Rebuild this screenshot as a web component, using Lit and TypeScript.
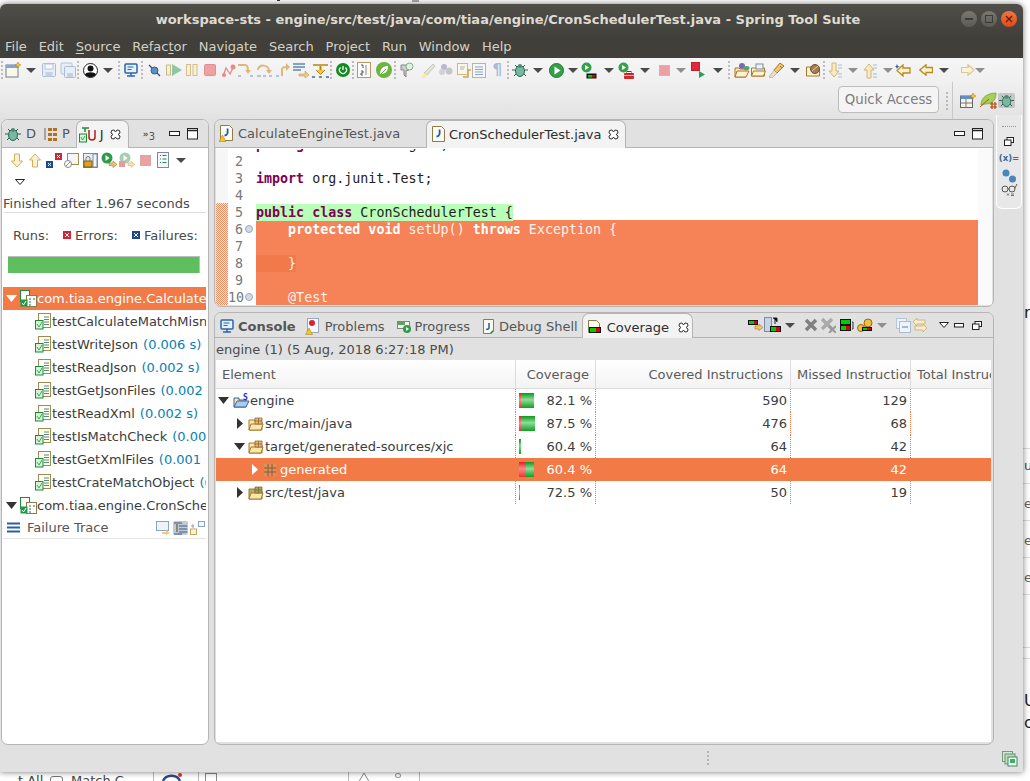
import { LitElement, html, css, svg } from "lit";
import { customElement } from "lit/decorators.js";

const S = (w: number, h: number, body: unknown, vb?: string) =>
  html`<svg class="ic" width=${w} height=${h} viewBox=${vb || `0 0 ${w} ${h}`}>${body}</svg>`;
const sp = (n: number) => html`<span class="sp" style="width:${n}px"></span>`;

const bugBody = svg`<path d="M3 3l3 3M13 3l-3 3M0 8h3M13 8h3M2 14l3-3M14 14l-3-3" stroke="#2a5a4a"/><ellipse cx="8" cy="9" rx="4.500" ry="5.500" fill="#78b7a0" stroke="#2d6a5a"/><circle cx="8" cy="4" r="2" fill="#4a8a7a"/>`;
const icons: Record<string, () => unknown> = {
  newwin: () => S(16, 16, svg`<rect x="1" y="3" width="12" height="12" fill="#fdf8e4" stroke="#6d7f9c"/><rect x="1" y="3" width="12" height="3" fill="#7ea6d8"/><path d="M13 0l1 2 2 1-2 1-1 2-1-2-2-1 2-1z" fill="#f4c430" stroke="#a87a10" stroke-width=".5"/>`),
  save: () => S(16, 16, svg`<rect x="1.500" y="1.500" width="13" height="13" rx="1" fill="#e8eef5" stroke="#a9bcd4"/><rect x="4" y="2" width="8" height="5" fill="#f6f8fb" stroke="#b8c7da"/><rect x="4.500" y="10" width="7" height="4.500" fill="#c3d1e2"/>`),
  saveall: () => S(17, 16, svg`<rect x="1" y="1" width="11" height="11" rx="1" fill="#e8eef5" stroke="#b4c4d8"/><rect x="4.500" y="4.500" width="11" height="11" rx="1" fill="#e8eef5" stroke="#a9bcd4"/><rect x="7" y="11" width="6" height="4" fill="#c3d1e2"/>`),
  profile: () => S(15, 15, svg`<circle cx="7.500" cy="7.500" r="7" fill="#fff" stroke="#222"/><circle cx="7.500" cy="5.500" r="3" fill="#111"/><path d="M2 11.500c1-3 10-3 11 0-2 3.500-9 3.500-11 0z" fill="#111"/>`),
  monitor: () => S(14, 14, svg`<rect x="1" y="1" width="12" height="9" rx="1" fill="#e8f0fa" stroke="#2a66ad" stroke-width="1.500"/><path d="M3.500 4h6M3.500 6.500h4" stroke="#2a66ad"/><path d="M3 13h8M7 10v3" stroke="#2a66ad" stroke-width="1.500"/>`),
  bp: () => S(13, 13, svg`<path d="M1 1l11 11" stroke="#2a4d8c" stroke-width="1.300"/><circle cx="6.500" cy="6.500" r="3.500" fill="#5f8fbf" stroke="#345f8f"/>`),
  resume: () => S(16, 12, svg`<rect x=".5" y="1" width="4" height="10" fill="#f6efd0" stroke="#c9b98a"/><path d="M6 0l10 6-10 6z" fill="#8fc7a0"/>`),
  suspend: () => S(12, 12, svg`<rect x=".5" y=".5" width="4" height="11" fill="#f6efd0" stroke="#d3bf8c"/><rect x="7" y=".5" width="4" height="11" fill="#f6efd0" stroke="#d3bf8c"/>`),
  stop: () => S(12, 12, svg`<rect x=".5" y=".5" width="11" height="11" rx="1" fill="#efa0a0" stroke="#dc9090"/>`),
  disc: () => S(15, 13, svg`<path d="M2 12l3-8 4 6 4-8" fill="none" stroke="#e88a8a" stroke-width="1.300"/><circle cx="3" cy="11" r="2" fill="#e88a8a"/><circle cx="12" cy="3" r="2.500" fill="#e88a8a"/>`),
  into: () => S(17, 14, svg`<path d="M1 2h7c3 0 3 3 3 6" fill="none" stroke="#dcb978" stroke-width="2"/><path d="M8 7h6l-3 4z" fill="#dcb978"/><path d="M1 13h3M13 13h3" stroke="#9bb7d6" stroke-width="1.500"/>`),
  over: () => S(17, 14, svg`<path d="M2 7c0-6 11-6 11 1" fill="none" stroke="#dcb978" stroke-width="2"/><path d="M10 7h6l-3 4z" fill="#dcb978"/><path d="M1 13h4M7 13h3M13 13h3" stroke="#9bb7d6" stroke-width="1.500"/>`),
  ret: () => S(15, 14, svg`<path d="M6 13V7c0-3 2-3 5-3" fill="none" stroke="#dcb978" stroke-width="2"/><path d="M10 0v8l4-4z" fill="#dcb978"/><path d="M0 13h3" stroke="#9bb7d6" stroke-width="1.500"/>`),
  drop: () => S(17, 16, svg`<path d="M0 2h12M0 5h12M0 8h8" stroke="#5f86b3" stroke-width="1.500"/><path d="M6 12h6V9l4 4-4 3v-2H6z" fill="#f0c987" stroke="#c49a50" stroke-width=".6"/>`),
  filt: () => S(17, 15, svg`<path d="M1 2h15" stroke="#b8860b" stroke-width="1.500"/><path d="M8.500 3v6" stroke="#b8860b" stroke-width="2"/><path d="M4 7l4.500 4.500L13 7" fill="#f0c24a" stroke="#b8860b"/><path d="M0 14h3M7 14h3M14 14h3" stroke="#3a6ea5" stroke-width="1.500"/>`),
  power: () => S(14, 14, svg`<circle cx="7" cy="7" r="7" fill="#118a1e"/><path d="M4.500 4.500a3.500 3.500 0 1 0 5 0M7 3v4" fill="none" stroke="#fff" stroke-width="1.300"/>`),
  book: () => S(14, 16, svg`<rect x=".5" y=".5" width="13" height="15" fill="#fafafa" stroke="#b49a6a"/><path d="M9 3v10" stroke="#888"/><path d="M4 3h2v3M4 9h2v2H4v2h2" fill="none" stroke="#333" stroke-width=".8"/>`),
  leaf: () => S(16, 16, svg`<circle cx="8" cy="8" r="8" fill="#6db33f"/><path d="M4 12c0-6 4-8 8-8 0 5-2 8-8 8z" fill="#fff"/><path d="M4 13l6-6" stroke="#6db33f"/>`),
  search: () => S(14, 16, svg`<path d="M1 3h8v5l-3 1v6l-2-2V8H1z" fill="#c9cfc9" stroke="#888"/><circle cx="9.500" cy="4.500" r="3.500" fill="#e0f2e0" stroke="#7fb08f"/>`),
  hl: () => S(15, 15, svg`<path d="M12 1l2 2-8 9-3-2z" fill="#e3e3d8" stroke="#c8c8b8"/><path d="M0 15l3-5 3 2-2 3z" fill="#f6ef9a"/>`),
  bubbles: () => S(14, 12, svg`<circle cx="5" cy="3" r="3" fill="#bdb6d2"/><circle cx="3" cy="8" r="3" fill="#d2d2d2"/><circle cx="10" cy="7" r="3.500" fill="#c6c6c6"/>`),
  docs: () => S(15, 15, svg`<rect x=".5" y=".5" width="10" height="11" fill="#fbf7e6" stroke="#c9b98a"/><path d="M6 14h5V7h3" fill="none" stroke="#c9a45a" stroke-width="1.500"/><path d="M3 4h5M3 6h4" stroke="#a8b6c6"/>`),
  doc: () => S(14, 15, svg`<rect x=".5" y=".5" width="13" height="14" fill="#f4f6fa" stroke="#b7b7a0"/><path d="M3 4h8M3 6.500h8M3 9h8M3 11.500h8" stroke="#8ba4c4"/>`),
  pil: () => html`<span class="pil">¶</span>`,
  bug: () => S(16, 16, bugBody),
  run: () => S(15, 15, svg`<circle cx="7.500" cy="7.500" r="7" fill="#33a04a" stroke="#1f7a34"/><path d="M5.500 3.500l6 4-6 4z" fill="#fff"/>`),
  cov: () => S(16, 17, svg`<circle cx="5.500" cy="5.500" r="5" fill="#33a04a"/><path d="M4 3l4 2.500L4 8z" fill="#fff"/><rect x="5.500" y="11.500" width="10" height="5" fill="#111"/><rect x="7" y="13" width="4.500" height="2.500" fill="#0c0"/><rect x="11.500" y="13" width="3" height="2.500" fill="#d00"/>`),
  tool: () => S(16, 17, svg`<circle cx="5.500" cy="5.500" r="5" fill="#33a04a"/><path d="M4 3l4 2.500L4 8z" fill="#fff"/><rect x="6" y="11" width="10" height="6" rx="1" fill="#cf2a2a"/><rect x="9" y="9.500" width="4" height="2" fill="none" stroke="#a22"/><path d="M6 13.500h10" stroke="#fff" stroke-width=".7"/>`),
  stop2: () => S(11, 11, svg`<rect x=".5" y=".5" width="10" height="10" fill="#eba0a8" stroke="#d8b0b0"/>`),
  termrun: () => S(14, 16, svg`<rect x=".5" y=".5" width="8" height="8" fill="#e02a3a" stroke="#c02030"/><path d="M8 9l6 3.500L8 16z" fill="#2e9e5a"/>`),
  open1: () => S(16, 15, svg`<path d="M1 14V5h4l1 1h6v8z" fill="#fbe8b8" stroke="#a8782a"/><path d="M1 14l2-6h12l-3 6z" fill="#fdf1cf" stroke="#a8782a"/><circle cx="8" cy="3" r="3" fill="#7a6bb0"/><ellipse cx="12.500" cy="5" rx="3" ry="2" fill="#58a070"/>`),
  open2: () => S(15, 14, svg`<path d="M.5 13V5h13v8z" fill="#fdf1cf" stroke="#a8782a"/><path d="M.5 13l2-5h12l-2 5z" fill="#fdf1cf" stroke="#a8782a"/><rect x="5" y="1" width="7" height="5" fill="#eef2f8" stroke="#7a8ca5"/>`),
  brush: () => S(16, 16, svg`<path d="M11 1l4 3-7 7-3-3z" fill="#f0c46a" stroke="#a8782a"/><path d="M5 8l3 3-5 5-3-1z" fill="#e8e0c8" stroke="#9a9a80" stroke-width=".6"/><path d="M11 4l2 2" stroke="#a8782a"/>`),
  nut: () => S(15, 13, svg`<path d="M.5 12V3h6l1 1h6v8z" fill="#fdf1cf" stroke="#a8782a"/><circle cx="9" cy="5" r="4.500" fill="#a67c52" stroke="#6f4e2e"/><path d="M6 7l6-5" stroke="#e0cfa8"/>`),
  down: () => S(14, 17, svg`<path d="M4 1h4v8h3l-5 6-5-6h3z" fill="#fbeac0" stroke="#d0b47a"/><path d="M10 3h4M10 6h4M10 12h4M10 15h4" stroke="#a9bcd4"/>`),
  up: () => S(14, 17, svg`<path d="M4 16h4V8h3L6 2 1 8h3z" fill="#fbeac0" stroke="#d0b47a"/><path d="M10 3h4M10 6h4M10 12h4M10 15h4" stroke="#a9bcd4"/>`),
  backs: () => S(16, 13, svg`<path d="M15 4H8V1L2 6.500 8 12V9h7z" fill="#fdf1cf" stroke="#b88a20" stroke-width="1.300"/><path d="M2 0l.8 2 2 .6-2 .7L2 5l-.8-1.700-1.200-.7 1.200-.6z" fill="#2a5fb0"/>`),
  back: () => S(14, 12, svg`<path d="M13.500 3.500H7V.8L.8 6 7 11.200V8.500h6.500z" fill="#fdf1cf" stroke="#b88a20" stroke-width="1.300"/>`),
  fwd: () => S(14, 12, svg`<path d="M.5 3.500H7V.8L13.200 6 7 11.200V8.500H.5z" fill="#fbf2dc" stroke="#e0c48a" stroke-width="1.200"/>`),
  arrow: () => S(10, 5, svg`<path d="M0 0h10L5 5z" fill="#4a4a4a"/>`),
  arrowg: () => S(10, 5, svg`<path d="M0 0h10L5 5z" fill="#8f8f8f"/>`),
  sep: () => S(2, 18, svg`<path d="M1 0v18" stroke="#888" stroke-dasharray="2 2"/>`),
  persp: () => S(16, 15, svg`<rect x=".5" y="3" width="12" height="11.500" fill="#f8f4e4" stroke="#666"/><rect x=".5" y="3" width="12" height="3" fill="#5f8fc8"/><path d="M6 6v8M1 10h11" stroke="#777"/><path d="M13 0l1 2 2 1-2 1-1 2-1-2-2-1 2-1z" fill="#f4c430" stroke="#a87a10" stroke-width=".5"/>`),
  sts: () => S(18, 17, svg`<path d="M1 13C1 5 8 1 16 1c0 8-4 11-11 11z" fill="#a5cf58" stroke="#78982e" stroke-width=".7"/><path d="M0 15l9-8" stroke="#b06010"/><path d="M10 12h7M10 15h7M12 10v7M15 10v7" stroke="#b5420e" stroke-width="1.200"/>`),
};

const jdoc = svg`<path d="M1.500.5h9l3 3v12h-12z" fill="#fbfbf6" stroke="#8f7b48"/>`;
const jdocIcon = (warn = false) =>
  S(15, 17, svg`${jdoc}<path d="M8.500 3.500c.5 4 .2 7-3 7" fill="none" stroke="#2a5a9c" stroke-width="1.800"/>${warn ? svg`<path d="M3.500 10l3.500 6.500H0z" fill="#f4c430" stroke="#a07a10" stroke-width=".5"/>` : ""}`);
const testIcon = () =>
  S(16, 17, svg`<rect x="3.500" y=".5" width="12" height="14" fill="#fdfdf8" stroke="#a08a50"/><path d="M9 4h5M9 6.500h5M9 9h5M9 11.500h5" stroke="#5c8a70"/><rect x=".5" y="7.500" width="7.500" height="8.500" fill="#d8f2d8" stroke="#1c8a3a"/><path d="M2 11l2 3 3-5" fill="none" stroke="#3aaa5a"/>`);
const classIcon = () =>
  S(17, 17, svg`<rect x=".5" y=".5" width="9" height="11" fill="#fff" stroke="#1c8a3a"/><rect x="6.500" y="5.500" width="10" height="11" fill="#fff" stroke="#8f7b48"/><rect x=".5" y="9.500" width="7" height="7" fill="#1c9a44"/><path d="M2 13l1.500 2 2.500-4" fill="none" stroke="#fff"/><path d="M9 9h2M13 9h2M9 12h2M9 15h2" stroke="#1c6a4a"/>`);
const pkg = (fill: string, lines: string) =>
  S(16, 14, svg`<path d="M1 13V3h6v2h7v8z" fill=${fill} stroke="#a07a30"/><path d="M1 13l2-6h12l-2 6z" fill="#fde6a8" stroke="#a07a30"/><path d="M7 1h7v6H7z" fill=${lines} stroke="#8a5a20" stroke-width=".7"/><path d="M10.500 1v6M7 4h7" stroke="#8a5a20" stroke-width=".7"/>`);
const twR = (c = "#333") => S(8, 11, svg`<path d="M1 0l6 5.500L1 11z" fill=${c}/>`);
const twD = (c = "#333") => S(11, 7, svg`<path d="M0 0h11L5.500 7z" fill=${c}/>`);
const closeX = () =>
  S(11, 11, svg`<path d="M1.500 1.500L4 1l1.500 2L7 1l2.500.5L10 4 8 5.500 10 7l-.5 2.500L7 10 5.500 8 4 10l-2.500-.5L1 7l2-1.500L1 4z" fill="#fff" stroke="#333"/>`);
const minI = () => S(11, 6, svg`<rect x=".5" y=".5" width="10" height="4" fill="#fff" stroke="#222"/>`);
const maxI = () => S(11, 12, svg`<rect x=".5" y=".5" width="10" height="10.500" fill="#fff" stroke="#222"/><path d="M1 2.500h10" stroke="#222" stroke-width="1.500"/>`);
const restI = () => S(10, 9, svg`<rect x="3" y=".5" width="6.500" height="5" fill="#fff" stroke="#222"/><rect x=".5" y="3" width="6.500" height="5.500" fill="#fff" stroke="#222"/>`);
const triOut = () => S(10, 6, svg`<path d="M.5.5h9L5 5.500z" fill="#fff" stroke="#222"/>`);
const sq = (c: string) => S(8, 8, svg`<rect width="8" height="8" fill=${c}/><path d="M2 2l4 4M6 2L2 6" stroke="#fff"/>`);

// [icon, centre x] of the main toolbar
const MAIN_TB: [string, number][] = [
  ["sep", 2], ["newwin", 13], ["arrow", 31], ["save", 49], ["saveall", 68], ["sep", 78], ["profile", 90], ["arrow", 108], ["sep", 119],
  ["monitor", 131], ["sep", 142], ["bp", 154], ["resume", 174], ["suspend", 192], ["stop", 210], ["disc", 228], ["into", 245], ["over", 264],
  ["ret", 283], ["drop", 301], ["filt", 320], ["sep", 331], ["power", 343], ["sep", 353], ["book", 364], ["leaf", 384], ["sep", 395],
  ["search", 407], ["hl", 428], ["bubbles", 446], ["docs", 464], ["doc", 479], ["pil", 497], ["sep", 508], ["bug", 520], ["arrow", 538],
  ["run", 556], ["arrow", 573], ["cov", 589], ["arrow", 609], ["tool", 626], ["arrow", 645], ["stop2", 664], ["arrowg", 681], ["termrun", 698],
  ["arrow", 718], ["sep", 729], ["open1", 742], ["open2", 758], ["brush", 777], ["arrow", 795], ["nut", 813], ["sep", 824], ["down", 835],
  ["arrowg", 853], ["up", 870], ["arrowg", 888], ["backs", 903], ["back", 926], ["arrow", 944], ["fwd", 968], ["arrowg", 980],
];
const WIDTHS: Record<string, number> = { arrow: 10, arrowg: 10, sep: 2, pil: 9, saveall: 17, profile: 15, monitor: 14, bp: 13, suspend: 12, stop: 12, disc: 15, into: 17, over: 17, ret: 15, drop: 17, filt: 17,
  power: 14, book: 14, search: 14, hl: 15, bubbles: 14, docs: 15, doc: 14, run: 15, stop2: 11, termrun: 14, open2: 15, nut: 15, down: 14, up: 14, back: 14, fwd: 14 };

const JU = {
  dn: () => S(12, 15, svg`<path d="M3.500 1h5v7h3L6 14 .5 8h3z" fill="#fdf1cf" stroke="#d0b060"/>`),
  upp: () => S(12, 15, svg`<path d="M3.500 14h5V7h3L6 1 .5 7h3z" fill="#fdf1cf" stroke="#d0b060"/>`),
  sw: () => S(16, 15, svg`<rect x="0" y="8" width="7" height="7" fill="#1d4a8a"/><path d="M2 10l3 3M5 10l-3 3" stroke="#fff"/><rect x="9" y="0" width="7" height="7" fill="#d0263a"/><path d="M11 2l3 3M14 2l-3 3" stroke="#fff"/>`),
  hist: () => S(15, 15, svg`<rect x="3.500" y=".5" width="11" height="11" fill="#f4f6fa" stroke="#a08a50"/><circle cx="4" cy="11" r="3.500" fill="#fff" stroke="#888"/><path d="M2 13l4-4" stroke="#888"/>`),
  lock: () => S(15, 15, svg`<rect x=".5" y=".5" width="14" height="14" fill="#e8eef8" stroke="#7a8ca5"/><rect x="10" y="1" width="4" height="13" fill="#f4f4f4" stroke="#7a8ca5"/><rect x="1" y="8" width="8" height="6" fill="#e0a020" stroke="#7a5a10"/><path d="M3 8V5.500a2 2 0 0 1 4 0V8" fill="none" stroke="#777"/>`),
  rerun: () => S(17, 16, svg`<circle cx="6" cy="6" r="5.500" fill="#2f9a4a"/><path d="M4.500 3l4 3-4 3z" fill="#fff"/><path d="M8 11h4V9l4 3.500-4 3v-2H8z" fill="#f0c46a" stroke="#a8782a" stroke-width=".6"/>`),
  rerunf: () => S(17, 16, svg`<circle cx="6" cy="6" r="5.500" fill="#a5cfb0"/><path d="M4.500 3l4 3-4 3z" fill="#fff"/><rect x="0" y="9" width="6" height="6" fill="#e89aa0"/><path d="M9 11h3V9l4 3.500-4 3v-2H9z" fill="#f6e0b0" stroke="#d0b880" stroke-width=".6"/>`),
  stop: () => S(11, 11, svg`<rect x=".5" y=".5" width="10" height="10" fill="#efa0a0" stroke="#d8a8a8"/>`),
  hdoc: () => S(12, 16, svg`<rect x=".5" y=".5" width="11" height="15" fill="#f6f8fc" stroke="#7a8ca5"/><path d="M3 3.500h1M5.500 3.500h4M3 7h1M5.500 7h4M3 10.500h1M5.500 10.500h4" stroke="#1f8a4a"/>`),
};

const TESTS: [string, string][] = [
  ["testCalculateMatchMisn", ""],
  ["testWriteJson", "(0.006 s)"],
  ["testReadJson", "(0.002 s)"],
  ["testGetJsonFiles", "(0.002 s)"],
  ["testReadXml", "(0.002 s)"],
  ["testIsMatchCheck", "(0.002 s)"],
  ["testGetXmlFiles", "(0.001 s)"],
  ["testCrateMatchObject", "(0.000 s)"],
];

// Fragments of the desktop that show around the window
const BEHIND: [string, number, number, string][] = [
  ["n", 1024, 303, "big"], ["up", 1024, 458, "sm"], ["e", 1024, 496, "sm2"], ["e", 1024, 533, "sm2"], ["e", 1024, 570, "sm2"],
  ["U", 1024, 691, "big"], ["c", 1024, 713, "big"], ["t All", 18, 773, "sm"], ["Match C", 71, 773, "sm"],
];

@customElement("app-root")
export class AppRoot extends LitElement {
  static styles = css`
    :host { display: block; width: 1030px; height: 781px; position: relative; overflow: hidden; background: #fff;
      font-family: "DejaVu Sans", sans-serif; font-size: 13px; color: #3c3c3c; }
    .ic { display: block; flex: none; }
    .sp { display: block; flex: none; }
    .behind { position: absolute; white-space: nowrap; }
    .big { font-size: 16px; color: #222; }
    .sm { font-size: 13px; color: #444; }
    .sm2 { font-size: 13px; color: #666; }
    .frag { position: absolute; }
    .f1 { left: 277px; top: 0; width: 3px; height: 1px; background: #333; }
    .f2 { left: 412px; top: 0; width: 7px; height: 2px; background: #aaa; }
    .f3 { left: 50px; top: 776px; width: 11px; height: 11px; border: 1px solid #777; border-radius: 3px; }
    .f4 { left: 161px; top: 772px; }
    .f5 { left: 205px; top: 773px; width: 10px; height: 10px; border: 1px solid #888; }
    .f6 { left: 357px; top: 773px; }
    .f7 { left: 395px; top: 773px; width: 4px; height: 3px; border: 1px solid #999; border-radius: 50%; }
    .bline { position: absolute; left: 1023px; width: 7px; height: 1px; background: #ddd; }
    .bsep { position: absolute; top: 772px; height: 9px; width: 1px; background: #bbb; }
    .win { position: absolute; left: 0; top: 4px; width: 1023px; height: 768px; background: #e1e1e1;
      border-radius: 6px 6px 0 0; box-shadow: 0 0 6px rgba(0,0,0,.55); display: flex; flex-direction: column; overflow: hidden; }
    .title { height: 34px; flex: none; box-sizing: border-box; background: linear-gradient(#514e48, #403f3a); display: flex; align-items: center;
      justify-content: center; color: #dfdbd2; font-weight: 700; font-size: 13px; position: relative; padding: 0 7px 4px 0; white-space: nowrap; }
    .wbtns { position: absolute; left: 961px; top: 7px; display: flex; gap: 4px; }
    .wb { width: 16px; height: 16px; border-radius: 50%; background: linear-gradient(#7b7870, #5c5a53); display: flex; align-items: center; justify-content: center; }
    .wb.c { background: linear-gradient(#f0773f, #dd4a1e); }
    .menu { height: 20px; box-sizing: border-box; flex: none; background: #403f3a; color: #d4d0c7; display: flex; gap: 11.9px; padding: 1px 0 0 5px; align-items: flex-start; line-height: 16px; font-size: 13px; }
    .menu u { text-underline-offset: 2px; }
    .bars { height: 61px; flex: none; background: linear-gradient(#f5f5f5, #f0f0f0 40%, #e2e2e2); }
    .tb1 { display: flex; align-items: center; height: 24px; }
    .tb2 { display: flex; justify-content: flex-end; align-items: center; height: 37px; }
    .pil { display: block; color: #a9bcd4; font-size: 15px; font-weight: 700; width: 9px; text-align: center; }
    .qa { width: 101px; height: 27px; box-sizing: border-box; border: 1px solid #bcbcbc; border-radius: 4px; background: #f4f4f4;
      color: #7c7c7c; display: flex; align-items: center; justify-content: center; margin: -2px 7px 0 0; font-size: 13.33px; }
    .psep { margin-right: 4px; }
    .pline { width: 1px; height: 37px; background: #c8c8c8; margin-right: 7px; }
    .pgroup { display: flex; align-items: center; margin-right: 8px; }
    .pact { background: #c6c6c6; border-radius: 2px; padding: 0 1px; }
    .main { flex: 1; display: flex; padding: 0 1px; gap: 5px; min-height: 0; }
    .panel { border: 1px solid #b5b5b5; border-radius: 7px; box-sizing: border-box; overflow: hidden; display: flex; flex-direction: column; background: #e1e1e1; }
    .left { width: 208px; height: 626px; background: #fff; }
    .center { width: 780px; display: flex; flex-direction: column; gap: 5px; height: 626px; }
    .editor { height: 188px; flex: none; }
    .bottom { height: 433px; flex: none; }
    .tabs { height: 27px; flex: none; display: flex; align-items: stretch; border-bottom: 1px solid #b5b5b5; background: #e1e1e1; color: #555; }
    .tabs.bt { height: 24px; }
    .tab { display: flex; align-items: center; white-space: nowrap; box-sizing: border-box; }
    .bt .tab { padding-top: 2px; }
    .tab.on { background: #f3f3f3; border: 1px solid #b5b5b5; border-bottom: none; border-radius: 7px 7px 0 0; color: #2e2e2e; margin-bottom: -1px; }
    .spacer { flex: 1; }
    .ctl { display: flex; align-items: center; }
    .ctl.pad { padding-right: 10px; gap: 7px; }
    .ctl.cov { padding-right: 11px; }
    .lt-d { padding: 0 5px 0 3px; gap: 5px; }
    .lt-p { padding: 0 6px 0 3px; gap: 4px; }
    .lt-j { width: 53px; padding-left: 2px; }
    .j-letter { margin: 0 6px 0 4px; }
    .more { font-size: 9px; margin-right: 7px; line-height: 14px; white-space: nowrap; font-weight: 700; color: #555; }
    .more span { font-weight: 400; position: relative; top: 3px; font-size: 10px; }
    .ju { display: flex; align-items: center; height: 26px; padding-left: 9px; margin-top: -1px; }
    .tw2 { padding: 6px 0 0 13px; height: 15px; box-sizing: border-box; }
    .fin { padding: 8px 0 0 1px; line-height: 16px; height: 25px; box-sizing: border-box; color: #4a4a4a; white-space: nowrap; }
    .rule { height: 1px; background: #ddd; margin: -1px 2px 0; }
    .counts { display: flex; align-items: center; height: 44px; padding-left: 11px; color: #4a4a4a; white-space: nowrap; }
    .counts .ic { margin: 0 4px 0 14px; }
    .pbar { height: 17px; flex: none; margin: -1px 8px 0 6px; background: #5fbf5f; border: 1px solid #bdbdbd; border-width: 1px 1px 0 0; box-sizing: border-box; }
    .tree { margin: 14px 2px 0 1px; overflow: hidden; flex: none; }
    .tr { height: 23px; display: flex; align-items: center; white-space: nowrap; overflow: hidden; }
    .tr.sel { background: #f27a47; color: #fff; }
    .tw { width: 14px; margin: 0 2px 0 1px; display: flex; justify-content: center; flex: none; }
    .tr.test { padding-left: 32px; gap: 1px; }
    .t { color: #0a80b0; margin-left: 4px; }
    .trace { display: flex; align-items: center; height: 21px; padding: 0 1px 0 4px; gap: 7px; border-bottom: 1px solid #e4e4e4; margin: 0 2px 0 1px; color: #555; flex: none; }
    .tri { display: flex; margin-left: auto; align-items: center; gap: 2px; }
    .tri .act { background: #c8c8c8; border-radius: 2px; padding: 0 1px; }
    .et-1 { width: 211px; padding-left: 4px; gap: 4px; }
    .et-2 { width: 200px; padding-left: 4px; gap: 3px; }
    .et-2 .ic:last-child { margin-left: 4px; }
    .edbody { flex: 1; display: flex; background: #fff; margin: 0 1px 1px; overflow: hidden; border-top: 1px solid #fff; }
    .ruler { width: 12px; background: #f6f6f6; flex: none; display: flex; flex-direction: column; }
    .ruler i { display: block; height: 54px; flex: none; }
    .ruler b { flex: 1; display: block; background: repeating-conic-gradient(#f08a60 0 25%, #f8f1ec 0 50%) 0 0 / 2px 2px; }
    .nums { width: 28px; flex: none; color: #787878; font: 13.33px/17px "DejaVu Sans Mono", monospace; margin-top: -13px; }
    .nums div { height: 17px; position: relative; width: 15px; text-align: right; }
    .nums .fold { position: absolute; left: 17px; top: 4px; width: 8px; height: 8px; border-radius: 50%; background: #d4dbe6; border: 1px solid #9aa8bc; box-sizing: border-box; }
    .code { flex: 1; font: 13.33px/17px "DejaVu Sans Mono", monospace; margin-top: -14px; white-space: pre; color: #222; }
    .code .l { height: 17px; box-sizing: border-box; padding-top: 1px; }
    .code .l span, .code .l em { line-height: 16px; }
    .kw { color: #7f0055; font-weight: 700; }
    .gl { display: inline-block; background: #b9ffb9; margin-top: -1px; padding-top: 1px; }
    .hl { background: #f58357; color: #fff2ea; }
    .hl b { color: #fff; }
    .hl em { font-style: normal; background: #f27a4a; display: inline-block; width: 40px; margin-top: -1px; padding-top: 1px; height: 16px; }
    .over { width: 14px; flex: none; background: #fafafa; }
    .bt-c { padding-left: 5px; padding-right: 4px; gap: 4px; font-weight: 700; }
    .bt-p { padding-left: 5px; padding-right: 6px; gap: 4px; }
    .bt-g { padding-left: 6px; padding-right: 6px; gap: 4px; }
    .bt-d { padding-left: 6px; padding-right: 4px; gap: 4px; }
    .bt-v { width: 111px; padding-left: 4px; gap: 6px; }
    .bt-v .ic:last-child { margin-left: 3px; }
    .info { height: 22px; flex: none; display: flex; align-items: center; padding-left: 1px; color: #4a4a4a; background: #e1e1e1; }
    .table { flex: 1; background: #fff; margin: 0 2px 2px 1px; display: flex; flex-direction: column; overflow: hidden; }
    .grid { display: grid; grid-template-columns: 300px 80px 195px 120px 1fr; }
    .th { height: 29px; padding: 0 6px; background: linear-gradient(#fff, #f3f3f3); border-bottom: 1px solid #dcdcdc; border-right: 1px solid #dcdcdc;
      display: flex; align-items: center; color: #5a5a5a; overflow: hidden; white-space: nowrap; box-sizing: border-box; }
    .th.r { justify-content: flex-end; }
    .th.r7 { justify-content: flex-end; padding-right: 7px; }
    .th.last { border-right: none; }
    .td { height: 23px; display: flex; align-items: center; box-sizing: border-box; white-space: nowrap; border-right: 1px dotted #ee7a50; justify-content: flex-end; padding-right: 3px; position: relative; }
    .td.e { justify-content: flex-start; padding: 0; }
    .td.last { border-right: none; }
    .sel .td { background: #f27a47; color: #fff; border-right: 1px solid #f27a47; }
    .cb { position: absolute; left: 3px; top: 4px; height: 15px; display: flex; }
    .cb i { display: block; height: 15px; }
    .cb .red { background: linear-gradient(#d22, #ff8a8a 45%, #e33); }
    .cb .grn { background: linear-gradient(#0a9a1a, #8fdc9a 45%, #0fa020); }
    .tcell { display: flex; align-items: center; }
    .status { height: 27px; flex: none; display: flex; align-items: center; justify-content: flex-end; padding-right: 5px; gap: 293px; }
    .side { position: absolute; left: 996px; top: 115px; width: 26px; height: 94px; box-sizing: border-box; background: #e8e8e8; border: 1px solid #fff;
      border-top: none; border-radius: 0 0 6px 6px; display: flex; flex-direction: column; align-items: center; padding-top: 11px; }
    .dots { width: 14px; height: 1px; border-top: 1px dotted #999; margin-bottom: 9px; }
    .vars { color: #3a6a9a; font-size: 8.5px; font-weight: 700; margin: 6px 0 5px; line-height: 12px; white-space: nowrap; }
  `;

  private tb() {
    let x = 0;
    return MAIN_TB.map(([n, c]) => {
      const w = WIDTHS[n] || 16;
      const left = c - w / 2 - x;
      x = c + w / 2;
      return html`<span style="margin-left:${left}px">${icons[n]()}</span>`;
    });
  }

  private covRow(name: unknown, pct: string, cov: string, miss: string, bar: [number, number], sel: boolean, indent: number, tw: unknown, gap: number) {
    return html`<div class="grid ${sel ? "sel" : ""}">
      <div class="td e"><span class="tcell" style="padding-left:${indent}px">${tw}${sp(gap)}${name}</span></div>
      <div class="td"><span class="cb"><i class="red" style="width:${bar[0]}px"></i><i class="grn" style="width:${bar[1]}px"></i></span>${pct}</div>
      <div class="td">${cov}</div><div class="td">${miss}</div><div class="td last"></div></div>`;
  }

  render() {
    const code: unknown[] = [
      html`<div class="l"><span class="kw">package</span> com.tiaa.engine;</div>`,
      html`<div class="l"></div>`,
      html`<div class="l"><span class="kw">import</span> org.junit.Test;</div>`,
      html`<div class="l"></div>`,
      html`<div class="l"><span class="gl"><span class="kw">public</span> <span class="kw">class</span> CronSchedulerTest {</span></div>`,
      html`<div class="l hl">    <b>protected</b> <b>void</b> setUp() <b>throws</b> Exception {</div>`,
      html`<div class="l hl"></div>`,
      html`<div class="l hl"><em>    }</em></div>`,
      html`<div class="l hl"></div>`,
      html`<div class="l hl">    @Test</div>`,
    ];
    return html`
      <div class="frag f1"></div><div class="frag f2"></div>
      ${BEHIND.map(([t, x, y, c]) => html`<div class="behind ${c}" style="left:${x}px;top:${y}px">${t}</div>`)}
      ${[448, 483, 520, 557, 594, 647, 658].map((y) => html`<div class="bline" style="top:${y}px"></div>`)}
      <div class="frag f3"></div>
      ${[153, 198, 348, 419].map((x) => html`<div class="bsep" style="left:${x}px"></div>`)}
      <div class="frag f4">${S(22, 9, svg`<path d="M2 9a9 8 0 0 1 17 0" fill="none" stroke="#2a4a8a" stroke-width="2.500"/><circle cx="19" cy="3" r="2" fill="#d33"/>`)}</div>
      <div class="frag f5"></div>
      <div class="frag f6">${S(14, 8, svg`<path d="M7 0l7 12H0z" fill="none" stroke="#888"/>`)}</div>
      <div class="frag f7"></div>

      <div class="win">
        <div class="title">workspace-sts - engine/src/test/java/com/tiaa/engine/CronSchedulerTest.java - Spring Tool Suite
          <div class="wbtns">
            <span class="wb">${S(8, 2, svg`<rect width="8" height="2" fill="#3c3b37"/>`)}</span>
            <span class="wb">${S(8, 8, svg`<rect x=".5" y=".5" width="7" height="7" fill="none" stroke="#3c3b37"/>`)}</span>
            <span class="wb c">${S(8, 8, svg`<path d="M1 1l6 6M7 1l-6 6" stroke="#6a1e08" stroke-width="1.400"/>`)}</span>
          </div>
        </div>
        <div class="menu"><span>File</span><span>Edit</span><span><u>S</u>ource</span><span>Refac<u>t</u>or</span><span>Navigate</span><span>Search</span><span>Project</span><span>Run</span><span>Window</span><span>Help</span></div>
        <div class="bars">
          <div class="tb1">${this.tb()}</div>
          <div class="tb2">
            <span class="qa">Quick Access</span>
            <span class="psep">${icons.sep()}</span><span class="pline"></span>
            <span class="pgroup">${icons.persp()}${sp(4)}${icons.sts()}<span class="pact">${S(15, 15, bugBody, "0 0 16 16")}</span></span>
          </div>
        </div>
        <div class="main">
          <div class="panel left">
            <div class="tabs">
              <div class="tab lt-d">${icons.bug()}<span>D</span></div>
              <div class="tab lt-p">${S(14, 14, svg`<path d="M1 1v12" stroke="#666"/><rect x="4" y="1" width="4" height="3" fill="#b5701e"/><rect x="9" y="1" width="4" height="3" fill="#b5701e"/><rect x="4" y="6" width="4" height="3" fill="#b5701e"/><rect x="9" y="6" width="4" height="3" fill="#b5701e"/><rect x="4" y="11" width="4" height="3" fill="#b5701e"/><rect x="9" y="11" width="4" height="3" fill="#b5701e"/>`)}<span>P</span></div>
              <div class="tab on lt-j">${S(17, 16, svg`<path d="M3 1h7M6 1v4" stroke="#1c8a3a" stroke-width="1.500"/><rect x=".5" y="7" width="7" height="8" fill="#d8f2d8" stroke="#1c8a3a"/><path d="M2 10l1.500 3 2.500-4" fill="none" stroke="#3aaa5a"/><path d="M10 3v7a3 3 0 0 0 6 0V3" fill="none" stroke="#b02020" stroke-width="1.500"/>`)}<span class="j-letter">J</span>${closeX()}</div>
              <div class="spacer"></div>
              <div class="ctl pad"><span class="more">»<span>3</span></span>${minI()}${maxI()}</div>
            </div>
            <div class="ju">
              ${JU.dn()}${sp(6)}${JU.upp()}${sp(5)}${JU.sw()}${sp(2)}${JU.hist()}${sp(4)}${JU.lock()}${sp(3)}${JU.rerun()}${sp(1)}${JU.rerunf()}${sp(4)}${JU.stop()}${sp(6)}${JU.hdoc()}${sp(7)}${icons.arrow()}
            </div>
            <div class="tw2">${triOut()}</div>
            <div class="fin">Finished after 1.967 seconds</div>
            <div class="rule"></div>
            <div class="counts">
              <span>Runs:</span>
              ${sq("#d0263a")}<span>Errors:</span>
              ${sq("#1d4a8a")}<span>Failures:</span>
            </div>
            <div class="pbar"></div>
            <div class="tree">
              <div class="tr sel"><span class="tw">${twD("#fff")}</span>${classIcon()}<span>com.tiaa.engine.CalculateEngineTest</span></div>
              ${TESTS.map(([n, t]) => html`<div class="tr test">${testIcon()}<span>${n}</span>${t ? html`<span class="t">${t}</span>` : ""}</div>`)}
              <div class="tr"><span class="tw">${twD()}</span>${classIcon()}<span>com.tiaa.engine.CronSchedulerTest</span></div>
            </div>
            <div class="trace">
              ${S(13, 11, svg`<path d="M0 1.500h13M0 5.500h13M0 9.500h13" stroke="#2a5fa8" stroke-width="2"/>`)}
              <span>Failure Trace</span>
              <span class="tri">
                ${S(15, 14, svg`<rect x=".5" y=".5" width="12" height="9" fill="#eef3fa" stroke="#8aa4c4"/><path d="M6 11h4V9l4 3-4 2v-1H6z" fill="#f0c987"/>`)}
                <span class="act">${S(13, 14, svg`<path d="M0 2h8M5 5h8M5 8h8M5 11h8M0 13h8" stroke="#2a5fa8"/><path d="M3 3v8" stroke="#444"/>`)}</span>
                ${S(15, 14, svg`<rect x="8.500" y=".5" width="6" height="5" fill="#f4f8fc" stroke="#8aa4c4"/><rect x=".5" y="8" width="6" height="5.500" fill="#faf4dc" stroke="#c9a45a"/><path d="M1 5h3M3 3v4" stroke="#8aa4c4"/>`)}
              </span>
            </div>
          </div>
          <div class="center">
            <div class="panel editor">
              <div class="tabs">
                <div class="tab et-1">${jdocIcon(true)}<span>CalculateEngineTest.java</span></div>
                <div class="tab on et-2">${jdocIcon()}<span>CronSchedulerTest.java</span>${closeX()}</div>
                <div class="spacer"></div>
                <div class="ctl pad">${minI()}${maxI()}</div>
              </div>
              <div class="edbody">
                <div class="ruler"><i></i><b></b></div>
                <div class="nums">
                  ${[1, 2, 3, 4, 5, 6, 7, 8, 9, 10].map((n) => html`<div>${n === 1 ? "" : n}${n === 6 || n === 10 ? html`<span class="fold"></span>` : ""}</div>`)}
                </div>
                <div class="code">${code}</div>
                <div class="over"></div>
              </div>
            </div>
            <div class="panel bottom">
              <div class="tabs bt">
                <div class="tab bt-c">${icons.monitor()}<span>Console</span></div>
                <div class="tab bt-p">${S(16, 17, svg`<rect x="2.500" y=".5" width="11" height="14" fill="#f6f8fc" stroke="#98a8c0"/><circle cx="7" cy="5" r="3" fill="#d0263a"/><path d="M4 10l3.500 6.500H.5z" fill="#f4c430" stroke="#a07a10" stroke-width=".5"/>`)}<span>Problems</span></div>
                <div class="tab bt-g">${S(14, 14, svg`<rect x=".5" y="2.500" width="12" height="7" fill="#f0f4f0" stroke="#7a8a7a"/><rect x="1" y="3" width="7" height="3" fill="#5fa060"/><circle cx="10" cy="10" r="4" fill="#2f9a4a"/><path d="M9 8l3 2-3 2z" fill="#fff"/>`)}<span>Progress</span></div>
                <div class="tab bt-d">${S(13, 15, svg`<path d="M1.500.5h10v11l-3 3h-7z" fill="#fafaf0" stroke="#8f7b48"/><path d="M7 4v5a2 2 0 0 1-3 1" fill="none" stroke="#2a5a9c" stroke-width="1.500"/><path d="M8.500 14.500l3-3" stroke="#1c8a3a" stroke-width="1.500"/>`)}<span>Debug Shell</span></div>
                <div class="tab on bt-v">${S(14, 15, svg`<path d="M1.500.5h8l3 3v9h-11z" fill="#fdfdf6" stroke="#8f7b48"/><rect x="2" y="7" width="12" height="6" fill="#111"/><rect x="3" y="8" width="6" height="4" fill="#0c0"/><rect x="9" y="8" width="4" height="4" fill="#d00"/>`)}<span>Coverage</span>${closeX()}</div>
                <div class="spacer"></div>
                <div class="ctl cov">
                  ${S(16, 13, svg`<rect x="0" y="1" width="10" height="5" fill="#111"/><rect x="1" y="2" width="5" height="3" fill="#0c0"/><rect x="6" y="2" width="3" height="3" fill="#d00"/><path d="M7 7h4V5l4 3.500-4 3V10H7z" fill="#f0c46a" stroke="#a8782a" stroke-width=".6"/>`)}
                  ${S(17, 16, svg`<rect x=".5" y=".5" width="7" height="14" fill="#c6d4e4" stroke="#7a8ca5"/><path d="M9 1h4v4M11 3v4" stroke="#222"/><rect x="6" y="9" width="11" height="6" fill="#111"/><rect x="7" y="10" width="5" height="4" fill="#0c0"/><rect x="12" y="10" width="4" height="4" fill="#d00"/>`)}
                  ${sp(4)}${icons.arrow()}${sp(9)}
                  ${S(14, 14, svg`<path d="M2 2l10 10M12 2L2 12" stroke="#808080" stroke-width="3.500"/>`)}${sp(2)}
                  ${S(16, 16, svg`<path d="M2 2l10 10M12 2L2 12" stroke="#aaa" stroke-width="3.500"/><path d="M9 9l7 7M16 9l-7 7" stroke="#999" stroke-width="2"/>`)}${sp(4)}
                  ${S(14, 13, svg`<rect x="0" y="0" width="11" height="12" fill="#111"/><rect x="1" y="1" width="9" height="4" fill="#0c0"/><rect x="1" y="7" width="5" height="4" fill="#0c0"/><rect x="6" y="7" width="4" height="4" fill="#d00"/><path d="M12 3h1v7h-1" fill="none" stroke="#333"/>`)}${sp(2)}
                  ${S(18, 15, svg`<circle cx="12" cy="5" r="4" fill="#f0c040" stroke="#9a6a10"/><circle cx="5" cy="10" r="3.500" fill="#f0c040" stroke="#9a6a10"/><rect x="6" y="9" width="10" height="4" fill="#111"/><rect x="7" y="10" width="4" height="2" fill="#0c0"/><rect x="11" y="10" width="4" height="2" fill="#d00"/>`)}${sp(3)}
                  ${icons.arrowg()}${sp(9)}
                  ${S(15, 15, svg`<rect x=".5" y=".5" width="10" height="10" fill="#eef3fa" stroke="#b4c4d8"/><rect x="3.500" y="3.500" width="11" height="11" fill="#eef3fa" stroke="#a9bcd4"/><path d="M6 9h6" stroke="#8aa4c4" stroke-width="1.500"/>`)}${sp(1)}
                  ${S(16, 16, svg`<path d="M1 5l4-4v2h8v4H5v2z" fill="#f8eccc" stroke="#d0b880"/><path d="M15 11l-4 4v-2H3V9h8V7z" fill="#f8eccc" stroke="#d0b880"/>`)}${sp(11)}
                  ${triOut()}${sp(5)}${S(10, 5, svg`<rect x=".5" y=".5" width="9" height="3.500" fill="#fff" stroke="#222"/>`)}${sp(8)}${restI()}
                </div>
              </div>
              <div class="info">engine (1) (5 Aug, 2018 6:27:18 PM)</div>
              <div class="table">
                <div class="grid">
                  <div class="th">Element</div><div class="th r">Coverage</div><div class="th r7">Covered Instructions</div><div class="th">Missed Instructions</div><div class="th last">Total Instructions</div>
                </div>
                ${this.covRow(html`${S(17, 15, svg`<path d="M1 14V5h5v2h7v7z" fill="#fde6a8" stroke="#3a5fa0"/><path d="M1 14l3-6h12l-3 6z" fill="#a8cdf0" stroke="#3a5fa0"/><text x="10" y="7" font-size="8" font-weight="700" font-family="DejaVu Sans Mono" fill="#1a2fd0">S</text>`)}<span>engine</span>`, "82.1 %", "590", "129", [2, 13], false, 2, twD(), 4)}
                ${this.covRow(html`${pkg("#fde6a8", "#e8b878")}${sp(1)}<span>src/main/java</span>`, "87.5 %", "476", "68", [2, 14], false, 20, twR(), 4)}
                ${this.covRow(html`${pkg("#fde6a8", "#e8b878")}${sp(1)}<span>target/generated-sources/xjc</span>`, "60.4 %", "64", "42", [1, 1], false, 18, twD(), 3)}
                ${this.covRow(html`${S(12, 12, svg`<rect x="0" y="0" width="12" height="12" fill="#c8a070" opacity=".6"/><path d="M4 0v12M8 0v12M0 4h12M0 8h12" stroke="#8a5a30"/>`)}${sp(4)}<span>generated</span>`, "60.4 %", "64", "42", [7, 8], true, 35, twR("#fff"), 5)}
                ${this.covRow(html`${pkg("#b8a870", "#8fb060")}${sp(1)}<span>src/test/java</span>`, "72.5 %", "50", "19", [0, 1], false, 20, twR(), 4)}
              </div>
            </div>
          </div>
        </div>
        <div class="status">
          ${S(2, 16, svg`<path d="M1 0v16" stroke="#888" stroke-dasharray="2 2"/>`)}
          ${S(16, 16, svg`<rect x=".5" y=".5" width="10" height="10" fill="#d8e8d8" stroke="#7a9a7a"/><rect x="3" y="3" width="10" height="10" fill="#bcdcbc" stroke="#5a9a6a"/><rect x="6" y="6" width="9" height="9" fill="#f0f8f8" stroke="#3a8a5a"/><rect x="8" y="8" width="5" height="4" fill="#3cb060"/>`)}
        </div>
      </div>
      <div class="side">
        <div class="dots"></div>
        ${restI()}
        <div class="vars">(x)=</div>
        ${S(14, 14, svg`<circle cx="4" cy="4" r="3.500" fill="#4a86bc"/><circle cx="10.500" cy="10" r="3.500" fill="#4a86bc"/>`)}
        ${sp(4)}
        ${S(17, 13, svg`<circle cx="4" cy="6" r="3" fill="none" stroke="#555"/><circle cx="11" cy="6" r="3" fill="none" stroke="#555"/><path d="M7 6h1M14 5l2-4" stroke="#555"/><path d="M6 10.500l2 2M8 10.500l-2 2M10 11h3M10 12.500h3" stroke="#444" stroke-width=".7"/>`)}
      </div>
    `;
  }
}
